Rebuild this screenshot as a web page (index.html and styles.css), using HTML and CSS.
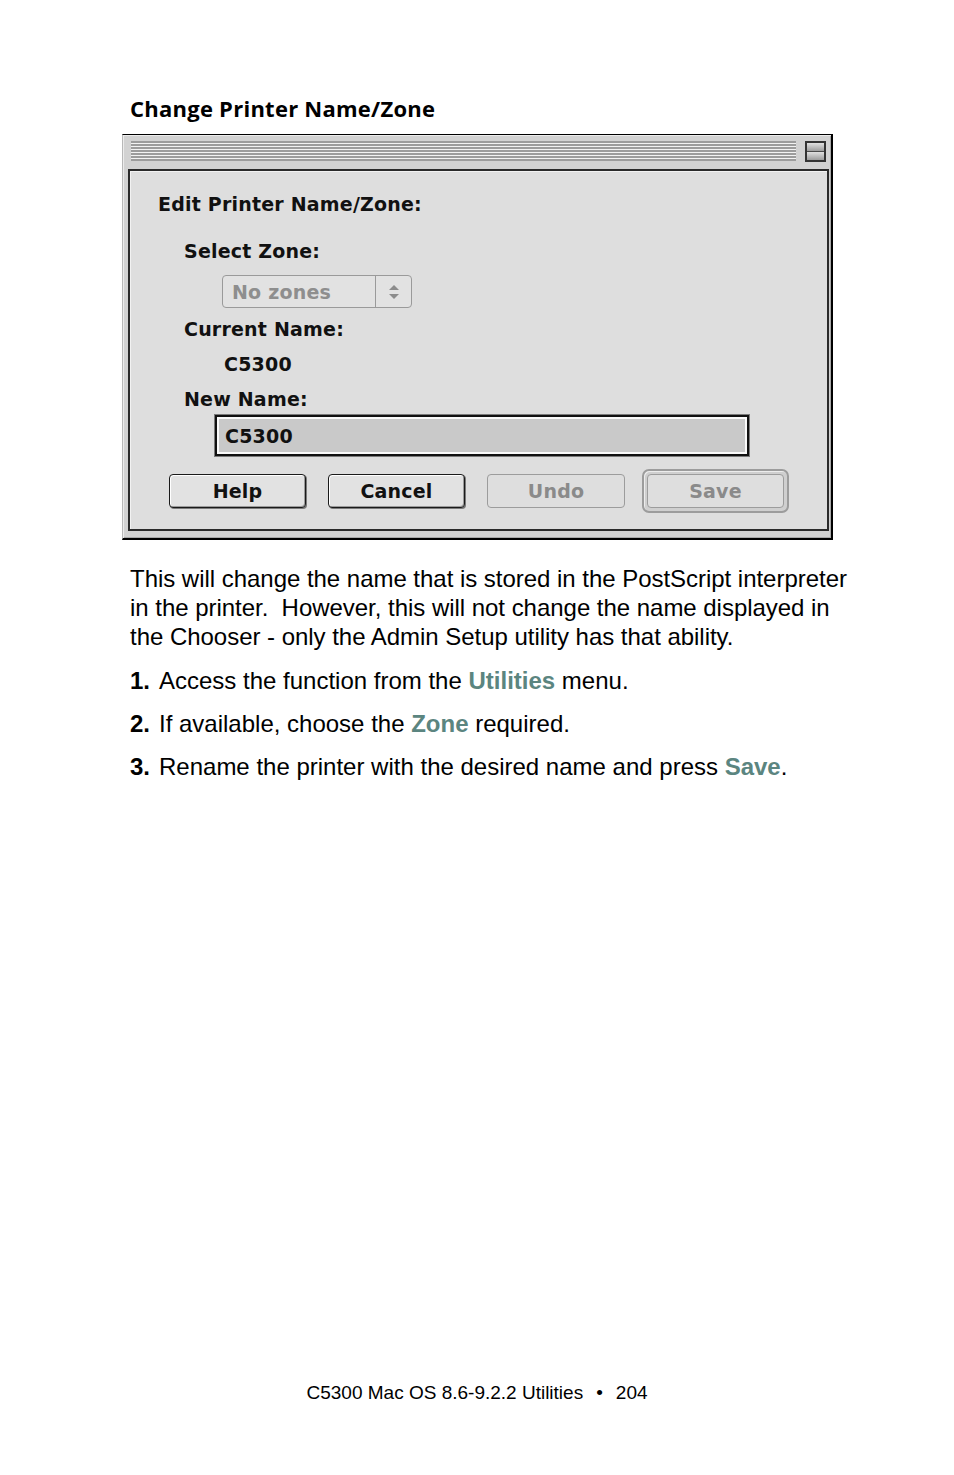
FILE: index.html
```html
<!DOCTYPE html>
<html lang="en">
<head>
<meta charset="utf-8">
<title>Change Printer Name/Zone</title>
<link rel="stylesheet" href="styles.css">
</head>
<body>
<div class="page">
  <main class="content">
    <h1 class="heading">Change Printer Name/Zone</h1>

    <div class="window">
      <div class="titlebar">
        <div class="stripes"></div>
        <div class="collapse"><span class="collapse-top"></span><span class="collapse-bot"></span></div>
      </div>
      <div class="panel">
        <div class="dlg-title">Edit Printer Name/Zone:</div>
        <div class="dlg-label lbl-zone">Select Zone:</div>
        <div class="popup">
          <span class="popup-text">No zones</span>
          <span class="popup-arrows">
            <svg width="12" height="18" viewBox="0 0 12 18"><path d="M6 2 L11 7 L1 7 Z" fill="#8c8c8c"/><path d="M1 11 L11 11 L6 16 Z" fill="#8c8c8c"/></svg>
          </span>
        </div>
        <div class="dlg-label lbl-current">Current Name:</div>
        <div class="dlg-value">C5300</div>
        <div class="dlg-label lbl-new">New Name:</div>
        <div class="field"><span class="field-text">C5300</span></div>
        <div class="buttons">
          <div class="btn">Help</div>
          <div class="btn">Cancel</div>
          <div class="btn disabled">Undo</div>
          <div class="btn-default"><div class="btn disabled inner">Save</div></div>
        </div>
      </div>
    </div>

    <p class="intro">This will change the name that is stored in the PostScript interpreter<br>in the printer.&nbsp; However, this will not change the name displayed in<br>the Chooser - only the Admin Setup utility has that ability.</p>

    <ol class="steps">
      <li><span class="num">1.</span>Access the function from the <span class="hl">Utilities</span> menu.</li>
      <li><span class="num">2.</span>If available, choose the <span class="hl">Zone</span> required.</li>
      <li><span class="num">3.</span>Rename the printer with the desired name and press <span class="hl">Save</span>.</li>
    </ol>
  </main>

  <footer class="footer">C5300 Mac OS 8.6-9.2.2 Utilities<span class="bullet">•</span>204</footer>
</div>
</body>
</html>
```

FILE: styles.css
```css
html, body {
  margin: 0;
  padding: 0;
  background: #ffffff;
}

.page {
  min-height: 1475px;
  display: flex;
  flex-direction: column;
  font-family: "Liberation Sans", Arial, sans-serif;
  color: #000;
}

.content {
  padding-left: 130px;
  padding-top: 96px;
}

.heading {
  margin: 0 0 14px 0;
  font-family: "Open Sans", "Noto Sans", sans-serif;
  font-weight: 700;
  font-size: 22px;
  line-height: 24px;
  letter-spacing: 0.25px;
}

/* ---------- Mac OS 9 window ---------- */
.window {
  margin-left: -8px;
  width: 708px;
  height: 403px;
  background: #d2d2d2;
  border-top: 1px solid #000;
  border-left: 1px solid #b8b8b8;
  border-right: 2px solid #000;
  border-bottom: 2px solid #000;
  box-shadow: inset 1px 1px 0 #ececec, inset -1px -1px 0 #a8a8a8;
  display: flex;
  flex-direction: column;
}

.titlebar {
  height: 34px;
  display: flex;
  align-items: center;
  padding: 0 5px 0 8px;
  gap: 8px;
}

.stripes {
  flex: 1;
  height: 20px;
  margin-top: -3px;
  background: repeating-linear-gradient(to bottom, #9c9c9c 0, #9c9c9c 2px, #f2f2f2 2px, #f2f2f2 3px);
}

.collapse {
  width: 17px;
  height: 17px;
  margin-top: -1px;
  margin-left: 1px;
  border: 2px solid #333;
  display: flex;
  flex-direction: column;
  background: #4a4a4a;
  gap: 1px;
}
.collapse-top, .collapse-bot {
  flex: 1;
  background: linear-gradient(to bottom, #e0e0e0, #9c9c9c);
}

.panel {
  margin: 0 2px 7px 5px;
  flex: 1;
  background: #dedede;
  border: 2px solid #2a2a2a;
  box-shadow: inset 1px 1px 0 #f2f2f2;
  padding: 21px 0 0 0;
  font-family: "DejaVu Sans", "Liberation Sans", sans-serif;
  font-weight: 700;
  font-size: 19px;
  letter-spacing: 0.2px;
  color: #111;
}

.dlg-title {
  margin-left: 28px;
  line-height: 24px;
}

.dlg-label {
  margin-left: 54px;
  line-height: 24px;
}
.lbl-zone { margin-top: 23px; }
.lbl-current { margin-top: 9px; }
.lbl-new { margin-top: 11px; }

.dlg-value {
  margin-left: 94px;
  margin-top: 11px;
  line-height: 24px;
}

.popup {
  margin: 12px 0 0 92px;
  width: 188px;
  height: 31px;
  border: 1px solid #9a9a9a;
  border-radius: 4px;
  background: #e2e2e2;
  display: flex;
  align-items: center;
  color: #8e8e8e;
}
.popup-text {
  flex: 1;
  padding-left: 9px;
}
.popup-arrows {
  width: 35px;
  height: 100%;
  border-left: 1px solid #9a9a9a;
  display: flex;
  align-items: center;
  justify-content: center;
}

.field {
  margin: 4px 0 0 85px;
  width: 530px;
  height: 37px;
  border: 2px solid #111;
  box-shadow: 0 0 0 1px #7a7a7a, inset 0 0 0 2px #fafafa;
  background: #c9c9c9;
  display: flex;
  align-items: center;
}
.field-text {
  padding-left: 8px;
}

.buttons {
  margin: 13px 0 0 39px;
  height: 44px;
  display: flex;
  align-items: center;
  gap: 22px;
}

.btn {
  width: 135px;
  height: 32px;
  border: 1px solid #1a1a1a;
  border-radius: 4px;
  background: #e2e2e2;
  box-shadow: inset 1px 1px 0 #ffffff, inset -1px -1px 0 #9a9a9a, 1px 1px 0 #7a7a7a;
  display: flex;
  align-items: center;
  justify-content: center;
  box-sizing: content-box;
  line-height: 1;
}
.btn.disabled {
  width: 136px;
  border-color: #9c9c9c;
  color: #8a8a8a;
  box-shadow: none;
  background: #dedede;
}

.btn-default {
  margin-left: -5px;
  padding: 3px;
  border: 2px solid #9c9c9c;
  border-radius: 7px;
  background: #cfcfcf;
  box-shadow: inset 1px 1px 0 #ececec;
}
.btn-default .inner {
  width: 135px;
  height: 32px;
}

/* ---------- body text ---------- */
.intro {
  margin: 24px 0 0 0;
  font-size: 24px;
  line-height: 29px;
  letter-spacing: -0.03px;
}

.steps {
  list-style: none;
  margin: 15px 0 0 0;
  padding: 0;
  font-size: 24px;
  line-height: 29px;
}
.steps li + li {
  margin-top: 14px;
}
.num {
  display: inline-block;
  width: 29px;
  font-weight: 700;
}
.hl {
  font-weight: 700;
  color: #5b8580;
}

.footer {
  margin-top: auto;
  padding-bottom: 71px;
  text-align: center;
  font-size: 19px;
  line-height: 22px;
}
.bullet {
  margin: 0 13px;
}
```
